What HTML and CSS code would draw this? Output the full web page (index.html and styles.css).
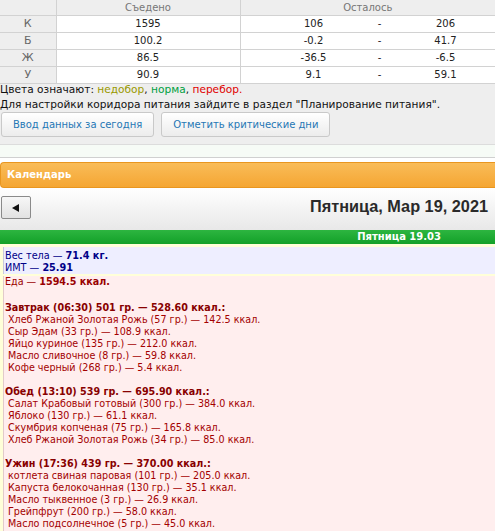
FILE: index.html
```html
<!DOCTYPE html>
<html lang="ru">
<head>
<meta charset="utf-8">
<title>Дневник питания</title>
<link rel="stylesheet" href="styles.css">
</head>
<body>
<div class="summary">
  <table class="norms">
    <colgroup><col class="c-lbl"><col class="c-eaten"><col></colgroup>
    <tr class="head"><th></th><th>Съедено</th><th>Осталось</th></tr>
    <tr><td class="lbl">К</td><td class="val under">1595</td><td><div class="range"><span>106</span><span>-</span><span>206</span></div></td></tr>
    <tr><td class="lbl">Б</td><td class="val norm">100.2</td><td><div class="range"><span>-0.2</span><span>-</span><span>41.7</span></div></td></tr>
    <tr><td class="lbl">Ж</td><td class="val over">86.5</td><td><div class="range"><span>-36.5</span><span>-</span><span>-6.5</span></div></td></tr>
    <tr><td class="lbl">У</td><td class="val under">90.9</td><td><div class="range"><span>9.1</span><span>-</span><span>59.1</span></div></td></tr>
  </table>
  <p class="legend">Цвета означают: <span class="under">недобор</span>, <span class="norm">норма</span>, <span class="over">перебор.</span><br>Для настройки коридора питания зайдите в раздел "Планирование питания".</p>
  <div class="actions">
    <button class="btn" type="button">Ввод данных за сегодня</button>
    <button class="btn" type="button">Отметить критические дни</button>
  </div>
</div>
<div class="strip"></div>
<div class="panel-head">Календарь</div>
<div class="calnav">
  <button class="prev" type="button" aria-label="Назад"><svg width="8" height="8" viewBox="0 0 8 8"><polygon points="7,0 7,8 0,4" fill="#111"/></svg></button>
  <h1 class="date">Пятница, Мар 19, 2021</h1>
</div>
<div class="dayhead">Пятница 19.03</div>
<div class="day">
  <div class="weight">
    <div>Вес тела — <b>71.4 кг.</b></div>
    <div>ИМТ — <b>25.91</b></div>
  </div>
  <div class="food">
    <div class="total">Еда — <b>1594.5 ккал.</b></div>
    <div class="meal first">
      <div class="meal-title">Завтрак (06:30) 501 гр. — 528.60 ккал.:</div>
      <div class="item">Хлеб Ржаной Золотая Рожь (57 гр.) — 142.5 ккал.</div>
      <div class="item">Сыр Эдам (33 гр.) — 108.9 ккал.</div>
      <div class="item">Яйцо куриное (135 гр.) — 212.0 ккал.</div>
      <div class="item">Масло сливочное (8 гр.) — 59.8 ккал.</div>
      <div class="item">Кофе черный (268 гр.) — 5.4 ккал.</div>
    </div>
    <div class="meal">
      <div class="meal-title">Обед (13:10) 539 гр. — 695.90 ккал.:</div>
      <div class="item">Салат Крабовый готовый (300 гр.) — 384.0 ккал.</div>
      <div class="item">Яблоко (130 гр.) — 61.1 ккал.</div>
      <div class="item">Скумбрия копченая (75 гр.) — 165.8 ккал.</div>
      <div class="item">Хлеб Ржаной Золотая Рожь (34 гр.) — 85.0 ккал.</div>
    </div>
    <div class="meal">
      <div class="meal-title">Ужин (17:36) 439 гр. — 370.00 ккал.:</div>
      <div class="item">котлета свиная паровая (101 гр.) — 205.0 ккал.</div>
      <div class="item">Капуста белокочанная (130 гр.) — 35.1 ккал.</div>
      <div class="item">Масло тыквенное (3 гр.) — 26.9 ккал.</div>
      <div class="item">Грейпфрут (200 гр.) — 58.0 ккал.</div>
      <div class="item">Масло подсолнечное (5 гр.) — 45.0 ккал.</div>
    </div>
  </div>
</div>
</body>
</html>
```

FILE: styles.css
```css
html, body {
  margin: 0;
  padding: 0;
}
body {
  font-family: "DejaVu Sans", Verdana, sans-serif;
  font-size: 10px;
  color: #222;
  background: #fff;
  overflow: hidden;
  height: 531px;
}

/* summary table */
.summary {
  background: #eeeeee;
  height: 144px;
}
.norms {
  width: 100%;
  border-collapse: collapse;
  table-layout: fixed;
}
.c-lbl { width: 56px; }
.c-eaten { width: 184px; }
.norms tr { height: 17px; }
.norms tr.head { height: 15px; }
.norms th,
.norms td {
  border: 1px solid #d2d2d2;
  padding: 0;
  text-align: center;
  vertical-align: middle;
}
.norms tr:first-child th { border-top: none; }
.norms th:first-child,
.norms td:first-child { border-left: none; }
.norms th:last-child,
.norms td:last-child { border-right: none; }
.head th {
  background: #eeeeee;
  color: #777;
  font-weight: normal;
  font-size: 10px;
  line-height: 13px;
}
.norms td {
  background: #fff;
  font-size: 10px;
  line-height: 14px;
  color: #222;
}
.norms td.lbl {
  background: #eeeeee;
  color: #666;
  font-size: 11px;
}
.range {
  display: grid;
  grid-template-columns: 66px 66px 66px;
  padding-left: 40px;
}
.under { color: #999900; }
.norm { color: #00a040; }
.over { color: #e00000; }

.legend {
  margin: -2px 0 0;
  font-size: 10.6px;
  line-height: 15px;
  color: #111;
}
.actions {
  display: flex;
  gap: 7px;
  padding-left: 1px;
}
.btn {
  height: 25px;
  padding: 0 11px;
  border: 1px solid #c9c9c9;
  border-radius: 3px;
  background: linear-gradient(#ffffff, #ececec);
  color: #2577b5;
  font-family: "DejaVu Sans", Verdana, sans-serif;
  font-size: 10px;
}

.strip {
  height: 12px;
  border-top: 1px solid #dcdcdc;
  border-bottom: 1px solid #d0d0d0;
  background: #f6fbf6;
  margin-bottom: 4px;
}

.panel-head {
  height: 24px;
  border: 1px solid #e9961f;
  border-right: none;
  border-radius: 4px 0 0 4px;
  background: linear-gradient(#f9bc58, #f5a633);
  color: #fff;
  font-weight: bold;
  font-size: 10px;
  line-height: 24px;
  padding-left: 6px;
}

.calnav {
  height: 42px;
  background: linear-gradient(#ffffff, #e8e8e8);
  display: flex;
  align-items: flex-start;
  justify-content: space-between;
  padding: 0 7px 0 1px;
}
.prev {
  margin-top: 8px;
  width: 30px;
  height: 23px;
  border: 1px solid #8a8a8a;
  border-radius: 2px;
  background: linear-gradient(#f7f7f7, #e2e2e2);
  padding: 0;
  display: flex;
  align-items: center;
  justify-content: center;
}
.prev svg { display: block; }
.date {
  margin: 9px 0 0;
  font-family: "Liberation Sans", Arial, sans-serif;
  font-size: 16.3px;
  line-height: 18px;
  font-weight: bold;
  color: #2a2a2a;
}

.dayhead {
  height: 14px;
  background: linear-gradient(#2db540, #12a028);
  color: #fff;
  font-weight: bold;
  font-size: 10px;
  line-height: 14px;
  text-align: right;
  padding-right: 54px;
}

.day {
  background: #ffffd9;
  padding: 3px 0 0 3px;
  height: 284px;
  display: flex;
  flex-direction: column;
  gap: 2px;
}
.weight {
  background: #eeeeff;
  border-left: 1px solid #c9c9dc;
  padding: 3px 0 0 1px;
  height: 24px;
  flex: none;
  color: #000088;
  font-size: 9.7px;
  line-height: 12px;
}
.food {
  flex: 1;
  min-height: 0;
  overflow: hidden;
  background: #ffeeee;
  border-left: 1px solid #e2caca;
  padding-left: 1px;
  color: #a30000;
  font-size: 9.6px;
  line-height: 12px;
}
.total { margin-bottom: 14px; color: #990000; }
.meal { margin-top: 12px; }
.meal.first { margin-top: 0; }
.meal-title {
  font-weight: bold;
  color: #880000;
}
.item { padding-left: 3px; }
```
